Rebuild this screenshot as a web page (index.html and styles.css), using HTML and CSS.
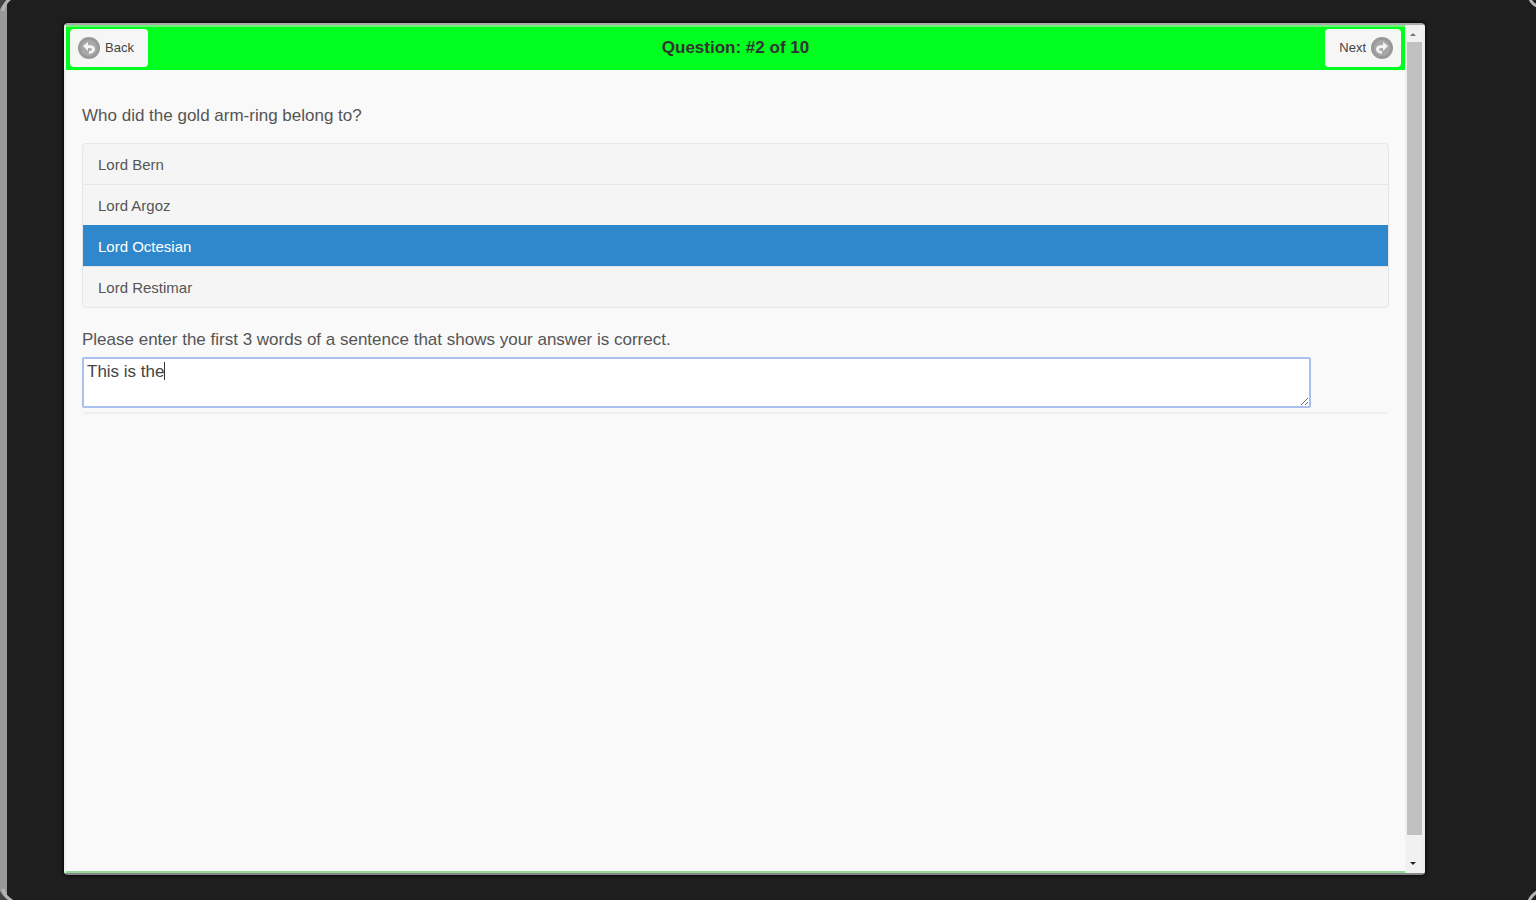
FILE: index.html
```
<!DOCTYPE html>
<html lang="en">
<head>
<meta charset="utf-8">
<title>Question 2</title>
<link rel="stylesheet" href="styles.css">
</head>
<body>
<div class="device">
  <svg class="corner corner-tl" viewBox="0 0 14 14" aria-hidden="true"><path class="corner-gap" d="M0 0H9Q3 3 0 9Z"/><path class="corner-edge" d="M10 -1Q4 3 3 11"/></svg>
  <svg class="corner corner-bl" viewBox="0 0 14 14" aria-hidden="true"><path class="corner-gap" d="M0 5Q3 11 9 14H0Z"/><path class="corner-edge" d="M3 3Q4 10 12 15"/></svg>
  <svg class="corner corner-tr" viewBox="0 0 14 14" aria-hidden="true"><path class="corner-edge" d="M8 -1Q10 4 15 6"/></svg>
  <svg class="corner corner-br" viewBox="0 0 14 14" aria-hidden="true"><path class="corner-edge" d="M7 15Q9 10 15 6"/></svg>
  <main class="screen">
    <form class="page">
      <header class="bar">
        <button type="button" class="nav nav-back">
          <svg class="nav-icon" viewBox="0 0 22 22" aria-hidden="true"><circle cx="11" cy="11" r="11" fill="#999"/><circle cx="11" cy="11" r="8" fill="#a8a8a8"/><path d="M5 9L10 5V8Q17 8 17 12Q17 16 11 17V14Q14 14 14 12Q14 11 10 11V14Z" fill="#f4f4f4"/></svg>
          Back
        </button>
        <h1 class="title">Question: #2 of 10</h1>
        <button type="button" class="nav nav-next">
          Next
          <svg class="nav-icon" viewBox="0 0 22 22" aria-hidden="true"><circle cx="11" cy="11" r="11" fill="#999"/><circle cx="11" cy="11" r="8" fill="#a8a8a8"/><path d="M17 9L12 5V8Q5 8 5 12Q5 16 11 17V14Q8 14 8 12Q8 11 12 11V14Z" fill="#f4f4f4"/></svg>
        </button>
      </header>
      <div class="content">
        <fieldset class="choices">
          <legend class="prompt">Who did the gold arm-ring belong to?</legend>
          <div class="options">
            <label class="option"><input class="radio" type="radio" name="answer">Lord Bern</label>
            <label class="option"><input class="radio" type="radio" name="answer">Lord Argoz</label>
            <label class="option"><input class="radio" type="radio" name="answer" checked>Lord Octesian</label>
            <label class="option"><input class="radio" type="radio" name="answer">Lord Restimar</label>
          </div>
        </fieldset>
        <div class="evidence">
          <label class="evidence-label" for="words">Please enter the first 3 words of a sentence that shows your answer is correct.</label>
          <div class="field">
            <textarea class="words" id="words">This is the</textarea>
            <span class="caret" aria-hidden="true"></span>
          </div>
        </div>
      </div>
    </form>
    <div class="scroll" aria-hidden="true">
      <svg class="arrow" viewBox="0 0 16 16"><path d="M5 11L8 8L11 11Z" fill="#777"/></svg>
      <div class="thumb"></div>
      <svg class="arrow" viewBox="0 0 16 16"><path d="M5 5L8 8L11 5Z" fill="#222"/></svg>
    </div>
  </main>
</div>
</body>
</html>
```

FILE: styles.css
```
* { box-sizing: border-box; }
body {
  margin: 0;
  background: #1e1e1e;
  color: #555;
  font: 17px/24px "Liberation Sans", Arial, sans-serif;
}
.device {
  position: relative;
  display: flex;
  min-height: 100vh;
  padding: 23px 111px 25px 57px;
  border-left: 7px solid #999;
}
.corner { position: absolute; width: 14px; height: 14px; overflow: hidden; }
.corner-tl { top: 0; left: -7px; }
.corner-bl { bottom: 0; left: -7px; }
.corner-tr { top: 0; right: 0; }
.corner-br { bottom: 0; right: 0; }
.corner-gap { fill: #444; }
.corner-edge { fill: none; stroke: #b4b4b4; stroke-width: 3; }
.screen {
  display: flex;
  flex: 1;
  min-width: 0;
  border: 2px solid #eee;
  border-top-color: #aaa;
  border-bottom-color: #888;
  border-radius: 4px;
  background: #f9f9f9;
  box-shadow: 0 0 3px 1px #0a0a0a;
}
.page {
  flex: 1;
  min-width: 0;
  border-top: 2px solid #6ef07a;
  border-bottom: 2px solid #8fd896;
}
.bar {
  display: grid;
  grid-template-columns: 1fr auto 1fr;
  align-items: center;
  padding: 2px 4px 3px;
  background: #00ff1e;
  color: #333;
}
.title { margin: 0; font-size: 17px; line-height: 24px; }
.nav {
  display: flex;
  align-items: center;
  gap: 5px;
  height: 38px;
  border: 0;
  border-radius: 4px;
  background: #f6f6f6;
  color: #444;
  font: 13px/16px "Liberation Sans", Arial, sans-serif;
}
.nav-back { justify-self: start; padding: 0 14px 0 8px; }
.nav-next { justify-self: end; padding: 0 8px 0 14px; }
.nav-icon { width: 22px; height: 22px; }
.content { padding: 34px 16px; }
.choices { min-width: 0; margin: 0; padding: 0; border: 0; }
.prompt { padding: 0; margin-bottom: 15px; }
.options {
  overflow: hidden;
  border: 1px solid #e6e6e6;
  border-radius: 4px;
  background: #f5f5f5;
}
.option {
  display: block;
  padding: 9px 15px 7px;
  font-size: 15px;
  line-height: 24px;
}
.option + .option { border-top: 1px solid #e6e6e6; }
.option:has(:checked) { background: #3088cc; border-color: #3088cc; color: #fff; }
.radio { position: absolute; opacity: 0; pointer-events: none; }
.evidence {
  padding-top: 20px;
  padding-bottom: 4px;
  border-bottom: 2px solid #eee;
  border-radius: 4px;
}
.evidence-label { display: block; margin-bottom: 5px; }
.field { position: relative; }
.words {
  display: block;
  width: 94%;
  height: 51px;
  padding: 1px 3px;
  border: 2px solid #a9c1ec;
  border-radius: 2px;
  outline: 0;
  background: #fff;
  color: #444;
  font: inherit;
  resize: vertical;
}
.caret {
  position: absolute;
  top: 5px;
  left: 82px;
  width: 1px;
  height: 18px;
  background: #333;
}
.words:focus + .caret { display: none; }
.scroll {
  display: flex;
  flex-direction: column;
  width: 18px;
  background: #f1f1f1;
}
.arrow { width: 16px; height: 16px; }
.thumb { flex: 1; margin: 1px 1px 22px 2px; background: #c1c1c1; }
```
